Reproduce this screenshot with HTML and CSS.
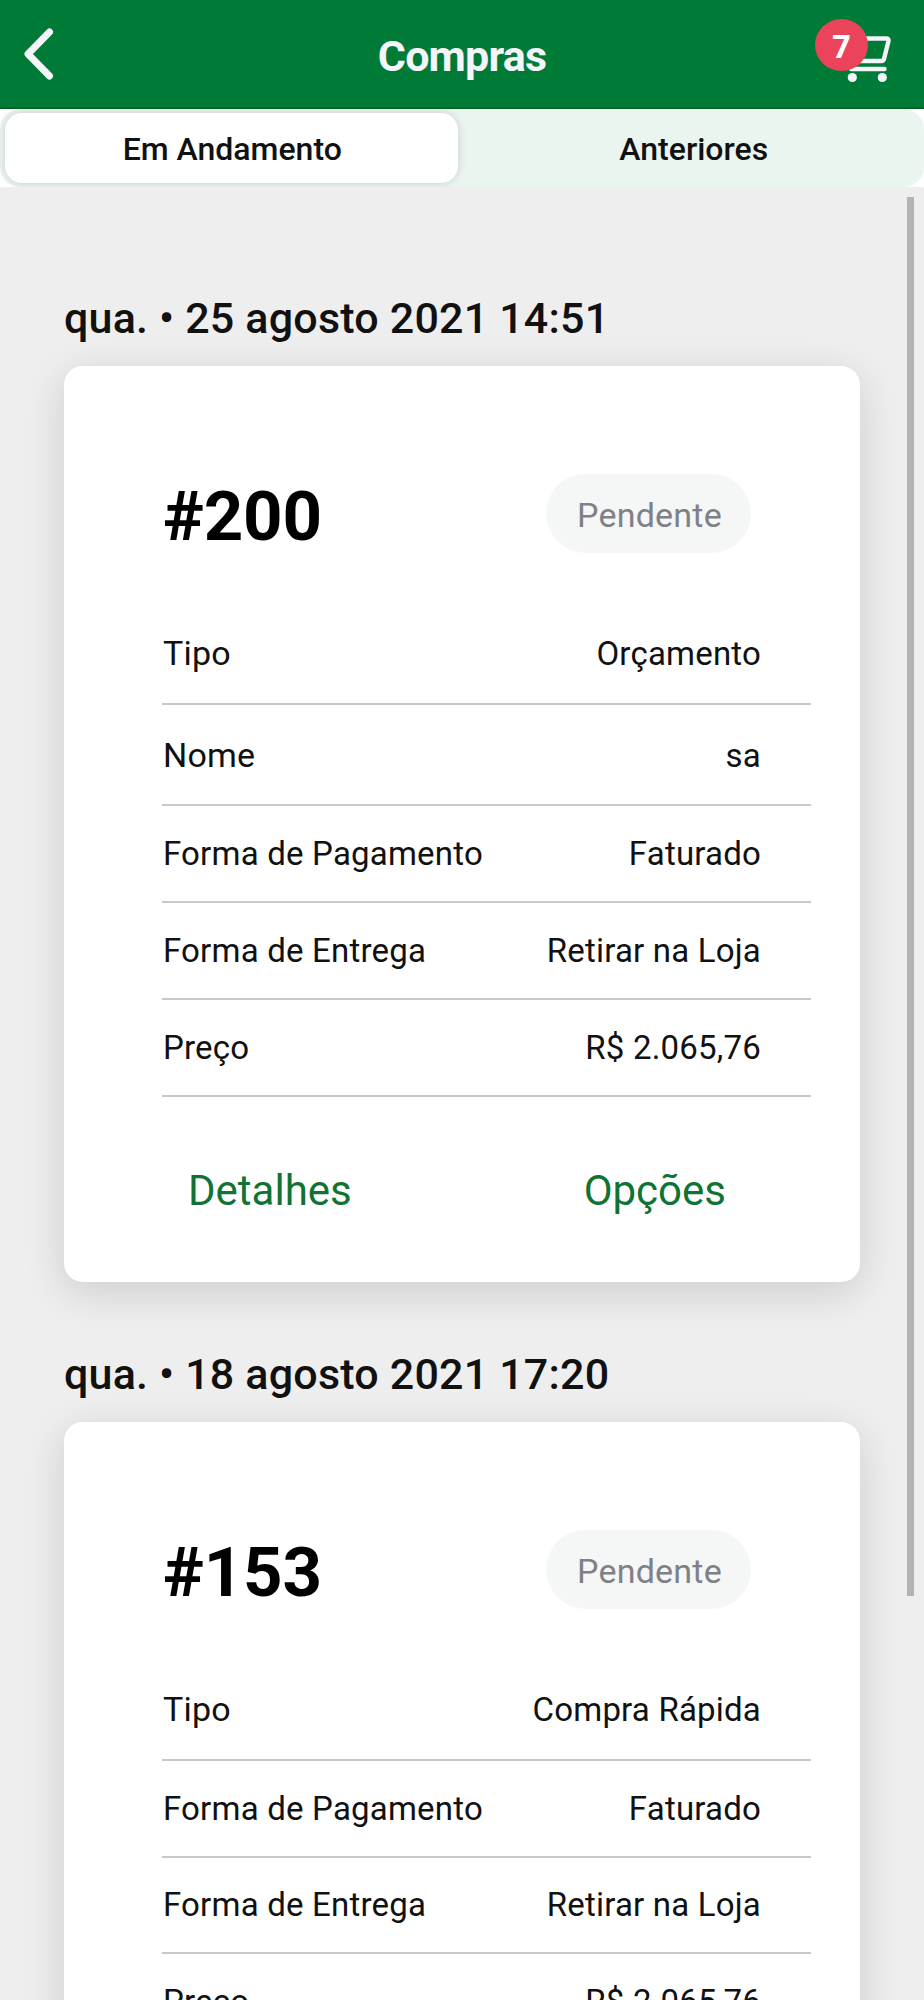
FILE: index.html
```html
<!DOCTYPE html>
<html lang="pt-BR">
<head>
<meta charset="utf-8">
<title>Compras</title>
<link rel="stylesheet" href="styles.css">
</head>
<body>
<header class="toolbar">
  <svg class="back" viewBox="0 0 40 60" width="40" height="60"><path d="M29.500 8 8 30 29.500 52"/></svg>
  <h1 class="title">Compras</h1>
  <div class="cart">
    <svg viewBox="0 0 84 80" width="84" height="80">
      <path d="M30 28.500H72Q75 28.500 74.500 31L70 49Q69.500 51 67.500 51H38M32 28.500 37 59H70.500"/>
      <circle cx="38.300" cy="67.500" r="4.600"/><circle cx="68.300" cy="67.500" r="4.600"/>
    </svg>
    <span class="count">7</span>
  </div>
</header>
<nav class="tabs-wrap">
  <div class="tabs">
    <div class="tab tab-active">Em Andamento</div>
    <div class="tab">Anteriores</div>
  </div>
</nav>
<main class="orders">
  <h2 class="date">qua. • 25 agosto 2021 14:51</h2>
  <article class="card">
    <div class="card-head"><strong class="number">#200</strong><span class="status">Pendente</span></div>
    <div class="row row-tall"><span class="label">Tipo</span><span>Orçamento</span></div>
    <div class="row row-tall"><span class="label">Nome</span><span>sa</span></div>
    <div class="row"><span>Forma de Pagamento</span><span>Faturado</span></div>
    <div class="row"><span>Forma de Entrega</span><span>Retirar na Loja</span></div>
    <div class="row"><span>Preço</span><span>R$ 2.065,76</span></div>
    <div class="actions"><span>Detalhes</span><span>Opções</span></div>
  </article>
  <h2 class="date">qua. • 18 agosto 2021 17:20</h2>
  <article class="card">
    <div class="card-head"><strong class="number">#153</strong><span class="status">Pendente</span></div>
    <div class="row row-tall"><span class="label">Tipo</span><span>Compra Rápida</span></div>
    <div class="row"><span>Forma de Pagamento</span><span>Faturado</span></div>
    <div class="row"><span>Forma de Entrega</span><span>Retirar na Loja</span></div>
    <div class="row"><span>Preço</span><span>R$ 2.065,76</span></div>
    <div class="actions"><span>Detalhes</span><span>Opções</span></div>
  </article>
  <div class="scrollbar"></div>
</main>
</body>
</html>
```
FILE: styles.css
```css
* { box-sizing: border-box; }
body {
  margin: 0;
  height: 2000px;
  overflow: hidden;
  display: flex;
  flex-direction: column;
  background: #eee;
  font-family: Roboto, sans-serif;
  color: #111;
}
.toolbar {
  flex: none;
  height: 109px;
  display: grid;
  grid-template-columns: 110px 1fr 110px;
  background: #007a37;
  border-bottom: 2px solid #046124;
  color: #f4f5f8;
}
.back {
  margin: 24px 0 0 20px;
  fill: none;
  stroke: #f4f5f8;
  stroke-width: 7;
  stroke-linecap: round;
  stroke-linejoin: round;
}
.title {
  margin: 0;
  text-align: center;
  font-size: 43px;
  font-weight: 700;
  line-height: 112px;
  letter-spacing: -0.8px;
}
.cart { position: relative; padding-top: 10px; }
.cart svg { display: block; }
.cart path { fill: none; stroke: #f4f5f8; stroke-width: 4.4; stroke-linejoin: round; stroke-linecap: round; }
.cart circle { fill: #f4f5f8; }
.count {
  position: absolute;
  left: 1px;
  top: 19px;
  width: 53px;
  height: 52px;
  border-radius: 50%;
  background: #eb445a;
  color: #fff;
  font: 700 32px/53px "Open Sans", sans-serif;
  text-align: center;
}
.tabs-wrap { flex: none; height: 78px; background: #fff; }
.tabs {
  height: 78px;
  padding: 4px 5px;
  display: grid;
  grid-template-columns: 1fr 1fr;
  gap: 9px;
  border-radius: 20px;
  background: #ebf5f0;
  overflow: hidden;
}
.tab {
  height: 70px;
  padding-left: 2px;
  border-radius: 17px;
  text-align: center;
  font-size: 32px;
  font-weight: 500;
  line-height: 73px;
}
.tab-active { background: #fff; box-shadow: 0 0 9px rgba(0, 0, 0, 0.16); }
.orders {
  position: relative;
  flex: 1;
  min-height: 0;
  padding: 39px 64px 0;
  overflow: hidden;
}
.date {
  margin: 67px 0 23px;
  font-size: 43px;
  font-weight: 500;
  line-height: 50px;
  letter-spacing: 0.2px;
}
.card {
  height: 916px;
  padding: 108px 49px 0 98px;
  border-radius: 19px;
  background: #fff;
  box-shadow: 0 10px 41px rgba(0, 0, 0, 0.14);
}
.card + .date { margin-top: 67px; }
.card-head {
  display: flex;
  justify-content: space-between;
  height: 129.2px;
  padding: 0 60px 0 1px;
}
.number { font-size: 69px; line-height: 86px; letter-spacing: -0.2px; color: #000; }
.status {
  width: 205px;
  height: 79px;
  border-radius: 40px;
  padding: 3px 0 0 2px;
  background: #f5f7f7;
  color: #7f8187;
  font-size: 34px;
  line-height: 76px;
  letter-spacing: 0.2px;
  text-align: center;
}
.row {
  height: 96.8px;
  padding: 0 50px 0 1px;
  display: flex;
  justify-content: space-between;
  align-items: center;
  border-bottom: 2px solid #c8c7cc;
  font-size: 33px;
  letter-spacing: 0.2px;
}
.row-tall { height: 101.6px; align-items: baseline; line-height: 100px; }
.label { font-size: 34px; }
.actions {
  display: flex;
  justify-content: space-between;
  padding: 69px 85px 0 26px;
  font-size: 42px;
  line-height: 50px;
  color: #117333;
}
.scrollbar {
  position: absolute;
  right: 10px;
  top: 10px;
  width: 7px;
  height: 1399px;
  background: #b3b3b3;
}
```
